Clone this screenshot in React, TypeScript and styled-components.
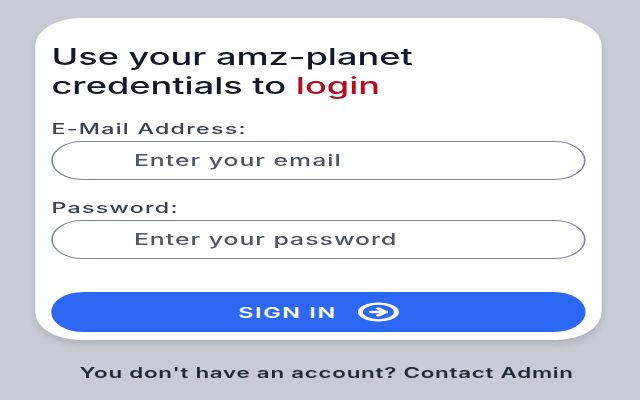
import React from "react";
import styled, { createGlobalStyle } from "styled-components";
import { CircleArrowRight } from "lucide-react";

const GlobalStyle = createGlobalStyle`
  html, body {
    margin: 0;
    width: 640px;
    height: 400px;
    overflow: hidden;
    background: #c6cbd5;
  }
`;

// the reference is a narrow page stretched sideways, so the whole thing is scaled on x
const Page = styled.div`
  width: 400px;
  height: 400px;
  box-sizing: border-box;
  padding: 18px 0 0 22.2px;
  transform: scaleX(1.6);
  transform-origin: left top;
  filter: blur(0.35px);
  font-family: Inter, "Liberation Sans", sans-serif;
`;

const Card = styled.form`
  width: 354px;
  height: 322px;
  box-sizing: border-box;
  padding: 24px 10px 0;
  background: #ffffff;
  border-radius: 28px;
  box-shadow: 0 4px 6px rgba(0, 0, 0, 0.12);
  display: flex;
  flex-direction: column;
`;

const Heading = styled.h1`
  margin: 0 0 20px;
  font-size: 22.6px;
  line-height: 29px;
  font-weight: 500;
  color: #111827;
`;

const Accent = styled.span`
  color: #b50d1e;
`;

const Field = styled.label`
  display: flex;
  flex-direction: column;
  gap: 4px;
  margin-bottom: 19px;
  font-size: 14.5px;
  line-height: 17px;
  font-weight: 500;
  letter-spacing: 0.8px;
  color: #374151;
`;

const Input = styled.input`
  height: 39px;
  box-sizing: border-box;
  padding: 0 0 0 50.5px;
  border: 1px solid #7d86a0;
  border-radius: 20px;
  background: #ffffff;
  font-family: inherit;
  font-size: 15.5px;
  font-weight: 500;
  letter-spacing: 0.62px;
  outline: none;

  &::placeholder {
    color: #4b5563;
    opacity: 1;
  }
`;

const Submit = styled.button`
  height: 40px;
  margin-top: 14px;
  border: 0;
  border-radius: 20px;
  background: #2d68f5;
  color: #ffffff;
  display: flex;
  align-items: center;
  justify-content: center;
  gap: 12px;
  font-family: inherit;
  font-size: 14.5px;
  font-weight: 600;
  letter-spacing: 1.1px;
`;

const Footer = styled.p`
  margin: 24px 0 0 5px;
  width: 354px;
  text-align: center;
  font-size: 14px;
  line-height: 17px;
  font-weight: 600;
  letter-spacing: 0.45px;
  color: #1f2937;
`;

export default function App() {
  return (
    <>
      <GlobalStyle />
      <Page>
        <Card>
          <Heading>
            Use your amz-planet
            <br />
            credentials to <Accent>login</Accent>
          </Heading>
          <Field>
            E-Mail Address:
            <Input type="email" placeholder="Enter your email" />
          </Field>
          <Field>
            Password:
            <Input type="password" placeholder="Enter your password" />
          </Field>
          <Submit type="button">
            SIGN IN
            <CircleArrowRight width={27} height={20} strokeWidth={2.8} preserveAspectRatio="none" />
          </Submit>
        </Card>
        <Footer>You don't have an account? Contact Admin</Footer>
      </Page>
    </>
  );
}
